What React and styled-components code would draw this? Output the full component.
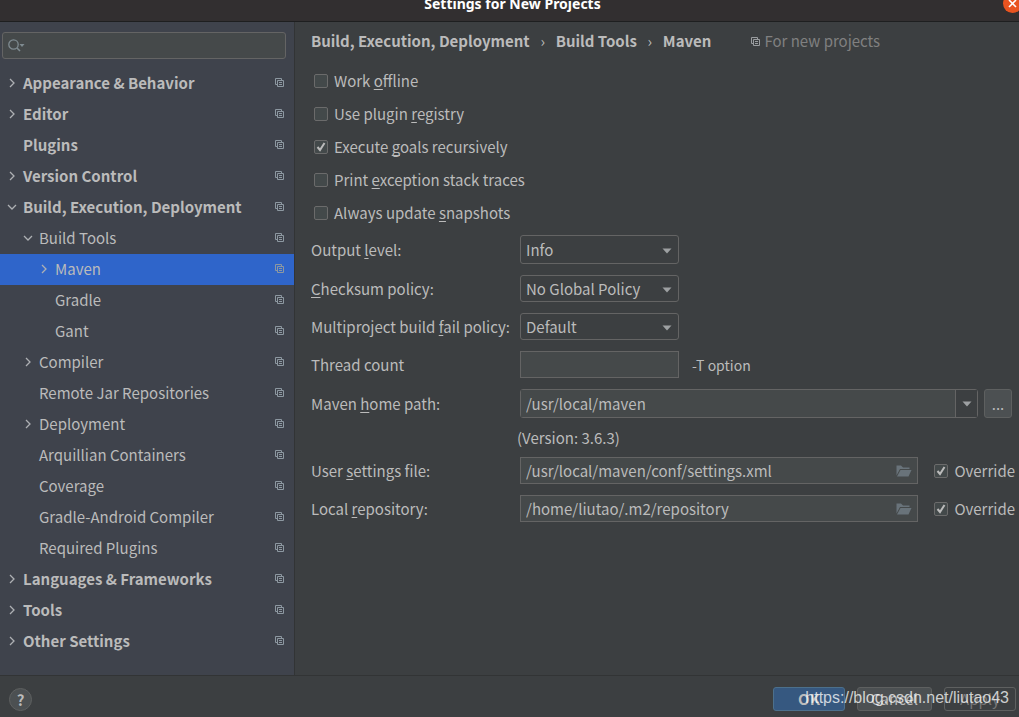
import React, { useState } from 'react'
import styled, { createGlobalStyle } from 'styled-components'

const tree = [
	{ label: 'Appearance & Behavior', level: 0, arrow: 'right' },
	{ label: 'Editor', level: 0, arrow: 'right' },
	{ label: 'Plugins', level: 0 },
	{ label: 'Version Control', level: 0, arrow: 'right' },
	{ label: 'Build, Execution, Deployment', level: 0, arrow: 'down' },
	{ label: 'Build Tools', level: 1, arrow: 'down' },
	{ label: 'Maven', level: 2, arrow: 'right' },
	{ label: 'Gradle', level: 2 },
	{ label: 'Gant', level: 2 },
	{ label: 'Compiler', level: 1, arrow: 'right' },
	{ label: 'Remote Jar Repositories', level: 1 },
	{ label: 'Deployment', level: 1, arrow: 'right' },
	{ label: 'Arquillian Containers', level: 1 },
	{ label: 'Coverage', level: 1 },
	{ label: 'Gradle-Android Compiler', level: 1 },
	{ label: 'Required Plugins', level: 1 },
	{ label: 'Languages & Frameworks', level: 0, arrow: 'right' },
	{ label: 'Tools', level: 0, arrow: 'right' },
	{ label: 'Other Settings', level: 0, arrow: 'right' },
]

const options = [
	{ label: 'Work _offline' },
	{ label: 'Use plugin _registry' },
	{ label: 'Execute _goals recursively', checked: true },
	{ label: 'Print _exception stack traces' },
	{ label: 'Always update _snapshots' },
]

const selects = [
	{
		id: 'output',
		label: 'Output _level:',
		values: ['Info', 'Debug', 'Warn', 'Error'],
		tall: true,
	},
	{
		id: 'checksum',
		label: '_Checksum policy:',
		values: ['No Global Policy', 'Fail', 'Warn'],
	},
	{
		id: 'fail',
		label: 'Multiproject build _fail policy:',
		values: ['Default', 'Fail Fast', 'Fail At End', 'Never Fail'],
	},
]

const paths = [
	{
		id: 'settings',
		label: 'User _settings file:',
		value: '/usr/local/maven/conf/settings.xml',
	},
	{
		id: 'repository',
		label: 'Local _repository:',
		value: '/home/liutao/.m2/repository',
	},
]

// the letter after "_" is the keyboard mnemonic
const Mnemonic = ({ text }) => {
	const [before, after] = text.split('_')
	if (after === undefined) return text
	return (
		<span>
			{before}
			<u>{after[0]}</u>
			{after.slice(1)}
		</span>
	)
}

const CopyIcon = () => (
	<svg width='9' height='9' viewBox='0 0 9 9' fill='none' stroke='currentColor'>
		<path d='M2 6.5H.5V.5H6.5V2' />
		<path d='M2.5 2.5H8.5V8.5H2.5Z' />
		<path d='M4 4.5H7M4 6.5H7' />
	</svg>
)

const Chevron = ({ direction }) => (
	<svg
		width='10'
		height='10'
		viewBox='0 0 10 10'
		fill='none'
		stroke='currentColor'
		strokeWidth='1.3'
	>
		{direction === 'right' && <path d='M3 1L7 5L3 9' />}
		{direction === 'down' && <path d='M1 3L5 7L9 3' />}
	</svg>
)

const Triangle = () => (
	<svg width='10' height='6' viewBox='0 0 10 6' fill='#9da0a2'>
		<path d='M.5 .5H9.5L5 5.5Z' />
	</svg>
)

const FolderIcon = () => (
	<svg width='16' height='12' viewBox='0 0 16 12' fill='#69737a'>
		<path d='M.5 .5H5L7 2.5H13.5V4H4L.5 10.5Z' />
		<path d='M4.5 5H15.5L12.5 11.5H1Z' />
	</svg>
)

const CheckBox = ({ label, defaultChecked }) => {
	const [checked, setChecked] = useState(Boolean(defaultChecked))
	return (
		<CheckLabel>
			<CheckWrapper>
				<CheckInput
					type='checkbox'
					checked={checked}
					onChange={(e) => setChecked(e.target.checked)}
				/>
				{checked && (
					<svg width='14' height='14' viewBox='0 0 14 14' fill='none'>
						<path d='M3.5 7L6 10L10.5 3' stroke='#bbbbbb' strokeWidth='2' />
					</svg>
				)}
			</CheckWrapper>
			<Mnemonic text={label} />
		</CheckLabel>
	)
}

const Sidebar = () => {
	const [selected, setSelected] = useState('Maven')
	return (
		<SidebarWrapper>
			<SearchBox>
				<svg width='17' height='13' viewBox='0 0 17 13' fill='none'>
					<circle cx='5.5' cy='5.5' r='4.7' stroke='#7f8b91' strokeWidth='1.3' />
					<path d='M9 9L12 12' stroke='#7f8b91' strokeWidth='1.6' />
					<path d='M11.5 5H16.5L14 8Z' fill='#7f8b91' />
				</svg>
				<SearchInput type='text' aria-label='Search settings' />
			</SearchBox>
			<Tree>
				{tree.map(({ label, level, arrow }) => (
					<li key={label}>
						<TreeRow
							type='button'
							$level={level}
							$selected={label === selected}
							onClick={() => setSelected(label)}
						>
							<Chevron direction={arrow} />
							<TreeText>{label}</TreeText>
							<CopyIcon />
						</TreeRow>
					</li>
				))}
			</Tree>
		</SidebarWrapper>
	)
}

const MavenSettings = () => (
	<Main>
		<Breadcrumb>
			<h2>Build, Execution, Deployment</h2>
			<Separator>›</Separator>
			<h2>Build Tools</h2>
			<Separator>›</Separator>
			<h2>Maven</h2>
			<Scope>
				<CopyIcon />
				For new projects
			</Scope>
		</Breadcrumb>
		<Options>
			{options.map(({ label, checked }) => (
				<CheckBox key={label} label={label} defaultChecked={checked} />
			))}
		</Options>
		<Form>
			{selects.map(({ id, label, values, tall }) => (
				<React.Fragment key={id}>
					<label htmlFor={id}>
						<Mnemonic text={label} />
					</label>
					<SelectWrapper>
						<Select id={id} $tall={tall}>
							{values.map((value) => (
								<option key={value}>{value}</option>
							))}
						</Select>
						<Triangle />
					</SelectWrapper>
				</React.Fragment>
			))}
			<label htmlFor='threads'>Thread count</label>
			<Field>
				<ThreadInput id='threads' type='text' />
				<Hint>-T option</Hint>
			</Field>
			<label htmlFor='home'>
				<Mnemonic text='Maven _home path:' />
			</label>
			<HomeField>
				<Combo>
					<ComboInput id='home' type='text' defaultValue='/usr/local/maven' />
					<ComboButton type='button' aria-label='Show paths'>
						<Triangle />
					</ComboButton>
				</Combo>
				<BrowseButton type='button'>...</BrowseButton>
			</HomeField>
			<Version>(Version: 3.6.3)</Version>
			{paths.map(({ id, label, value }) => (
				<React.Fragment key={id}>
					<label htmlFor={id}>
						<Mnemonic text={label} />
					</label>
					<Field>
						<PathBox>
							<PathInput id={id} type='text' defaultValue={value} />
							<FolderButton type='button' aria-label='Browse'>
								<FolderIcon />
							</FolderButton>
						</PathBox>
						<CheckBox label='Override' defaultChecked />
					</Field>
				</React.Fragment>
			))}
		</Form>
	</Main>
)

const App = () => {
	return (
		<Window>
			<GlobalStyle />
			<TitleBar>
				<Title>Settings for New Projects</Title>
				<CloseButton type='button' aria-label='Close'>
					<svg width='9' height='9' viewBox='0 0 9 9' stroke='#ffffff'>
						<path d='M1 1L8 8M8 1L1 8' strokeWidth='1.6' />
					</svg>
				</CloseButton>
			</TitleBar>
			<Content>
				<Sidebar />
				<MavenSettings />
			</Content>
			<Footer>
				<HelpButton type='button'>?</HelpButton>
				<Actions>
					<OkButton type='button'>OK</OkButton>
					<CancelButton type='button'>Cancel</CancelButton>
					<ApplyButton type='button' disabled>
						Apply
					</ApplyButton>
				</Actions>
				<Watermark>https://blog.csdn.net/liutao43</Watermark>
			</Footer>
		</Window>
	)
}

const GlobalStyle = createGlobalStyle`
	* {
		box-sizing: border-box;
	}

	body {
		margin: 0;
		background-color: #3c3f41;
	}

	body, button, input, select {
		font-family: 'Noto Sans CJK SC', 'Noto Sans', sans-serif;
		font-size: 15px;
		line-height: 24px;
		color: #bbbbbb;
	}

	u {
		text-underline-offset: 2px;
		text-decoration-skip-ink: none;
	}

	svg {
		display: block;
		flex-shrink: 0;
	}
`

const Window = styled.div`
	display: flex;
	flex-direction: column;
	min-height: 100vh;
`

const TitleBar = styled.header`
	display: flex;
	height: 22px;
	overflow: hidden;
	background-color: #322f30;
	border-bottom: 1px solid #1e1f20;
`

const Title = styled.h1`
	flex: 1;
	margin: 0;
	padding-left: 22px;
	font-family: 'Noto Sans', sans-serif;
	font-size: 14px;
	line-height: 8px;
	font-weight: 700;
	text-align: center;
	color: #ffffff;
`

const CloseButton = styled.button`
	display: flex;
	justify-content: center;
	align-items: center;
	width: 19px;
	height: 19px;
	margin: -6px -3px 0 0;
	padding: 0;
	border: none;
	border-radius: 50%;
	background-color: #e95420;
`

const Content = styled.div`
	display: flex;
	flex: 1;
`

const SidebarWrapper = styled.nav`
	flex: 0 0 295px;
	padding-top: 10px;
	background-color: #3f434c;
	border-right: 1px solid #323435;
`

const SearchBox = styled.div`
	display: flex;
	align-items: center;
	height: 27px;
	margin: 0 8px 9px 2px;
	padding: 0 5px;
	background-color: #45494a;
	border: 1px solid #646464;
	border-radius: 3px;
`

const SearchInput = styled.input`
	flex: 1;
	min-width: 0;
	padding: 0 4px;
	border: none;
	outline: none;
	background: transparent;
`

const Tree = styled.ul`
	margin: 0;
	padding: 0;
	list-style: none;
`

const TreeRow = styled.button`
	display: flex;
	align-items: center;
	width: 100%;
	height: 31px;
	border: none;
	padding: 0 10px 2px ${({ $level }) => 7 + $level * 16}px;
	background-color: ${({ $selected }) => ($selected ? '#2f65ca' : 'transparent')};
	font-weight: ${({ $level }) => ($level === 0 ? 700 : 400)};
	text-align: left;

	svg {
		color: #adb0b3;
	}

	svg:last-child {
		color: #8d98a1;
	}
`

const TreeText = styled.span`
	flex: 1;
	margin-left: 6px;
`

const Main = styled.main`
	flex: 1;
	min-width: 0;
	padding: 7px 4px 8px 16px;
`

const Breadcrumb = styled.div`
	display: flex;
	align-items: center;
	margin-bottom: 11px;

	h2 {
		margin: 0;
		font-size: 15px;
		font-weight: 700;
	}
`

const Separator = styled.span`
	width: 26px;
	text-align: center;
`

const Scope = styled.span`
	display: flex;
	align-items: center;
	gap: 4px;
	margin-left: 40px;
	color: #808080;

	svg {
		color: #9a9da0;
	}
`

const Options = styled.div`
	display: flex;
	flex-direction: column;
	align-items: flex-start;
	padding-left: 3px;

	label {
		height: 33px;
	}
`

const CheckLabel = styled.label`
	display: flex;
	align-items: center;
	gap: 6px;
`

const CheckWrapper = styled.span`
	position: relative;
	width: 14px;
	height: 14px;

	svg {
		position: absolute;
		top: 0;
		left: 0;
		pointer-events: none;
	}
`

const CheckInput = styled.input`
	appearance: none;
	display: block;
	width: 14px;
	height: 14px;
	margin: 0;
	background-color: #43494a;
	border: 1px solid #6b6b6b;
	border-radius: 2px;
`

const Form = styled.div`
	display: grid;
	grid-template-columns: 209px 1fr;
	row-gap: 11px;
	align-items: center;
	margin-top: 6px;

	> label {
		height: 27px;
		line-height: 27px;
	}
`

const Field = styled.div`
	display: flex;
	align-items: center;
`

const SelectWrapper = styled.div`
	position: relative;
	width: 159px;

	svg {
		position: absolute;
		top: 50%;
		right: 7px;
		margin-top: -2px;
		pointer-events: none;
	}
`

const Select = styled.select`
	appearance: none;
	display: block;
	width: 100%;
	height: ${({ $tall }) => ($tall ? 29 : 27)}px;
	padding: 0 20px 0 5px;
	background-color: #3c3f41;
	border: 1px solid #646464;
	border-radius: 3px;
`

const ThreadInput = styled.input`
	width: 159px;
	height: 27px;
	padding: 0 5px;
	background-color: #45494a;
	border: 1px solid #646464;
`

const Hint = styled.span`
	margin-left: 13px;
	font-size: 14px;
`

const HomeField = styled(Field)`
	gap: 6px;
	padding-right: 3px;
`

const Combo = styled.div`
	display: flex;
	flex: 1;
	height: 29px;
	border: 1px solid #646464;
	border-radius: 3px;
`

const ComboInput = styled.input`
	flex: 1;
	min-width: 0;
	padding: 0 5px;
	border: none;
	background-color: #45494a;
`

const ComboButton = styled.button`
	display: flex;
	justify-content: center;
	align-items: center;
	width: 22px;
	padding: 0;
	background-color: #3c3f41;
	border: none;
	border-left: 1px solid #646464;
`

const BrowseButton = styled.button`
	width: 28px;
	height: 29px;
	padding: 0;
	background-color: #4c5052;
	border: 1px solid #5e6060;
	border-radius: 3px;
`

const Version = styled.div`
	grid-column: 2;
	margin-left: -3px;
	line-height: 17px;
`

const PathBox = styled.div`
	display: flex;
	flex: 1;
	align-items: center;
	height: 27px;
	margin-right: 16px;
	background-color: #45494a;
	border: 1px solid #646464;
`

const PathInput = styled.input`
	flex: 1;
	min-width: 0;
	padding: 0 5px;
	border: none;
	background: transparent;
`

const FolderButton = styled.button`
	padding: 0 5px;
	border: none;
	background: transparent;
`

const Footer = styled.footer`
	position: relative;
	display: flex;
	justify-content: space-between;
	align-items: center;
	height: 42px;
	padding: 5px 3px 0 9px;
	border-top: 1px solid #323435;
`

const HelpButton = styled.button`
	width: 23px;
	height: 23px;
	padding: 0;
	background-color: #4c5052;
	border: 1px solid #5e6060;
	border-radius: 50%;
	font-weight: 700;
	line-height: 21px;
`

const Actions = styled.div`
	display: flex;
	gap: 12px;
`

const DialogButton = styled.button`
	width: 72px;
	height: 24px;
	padding: 0;
	background-color: #4c5052;
	border: 1px solid #5e6060;
	border-radius: 3px;
	line-height: 22px;
`

const OkButton = styled(DialogButton)`
	background-color: #365880;
	border-color: #4c708c;
	font-weight: 700;
`

const CancelButton = styled(DialogButton)`
	width: 75px;
`

const ApplyButton = styled(DialogButton)`
	background-color: transparent;
	color: #777777;
`

const Watermark = styled.span`
	position: absolute;
	top: 10px;
	right: 10px;
	font-family: 'Liberation Sans', Arial, sans-serif;
	font-size: 16px;
	color: rgba(255, 255, 255, 0.75);
	pointer-events: none;
`

export default App
